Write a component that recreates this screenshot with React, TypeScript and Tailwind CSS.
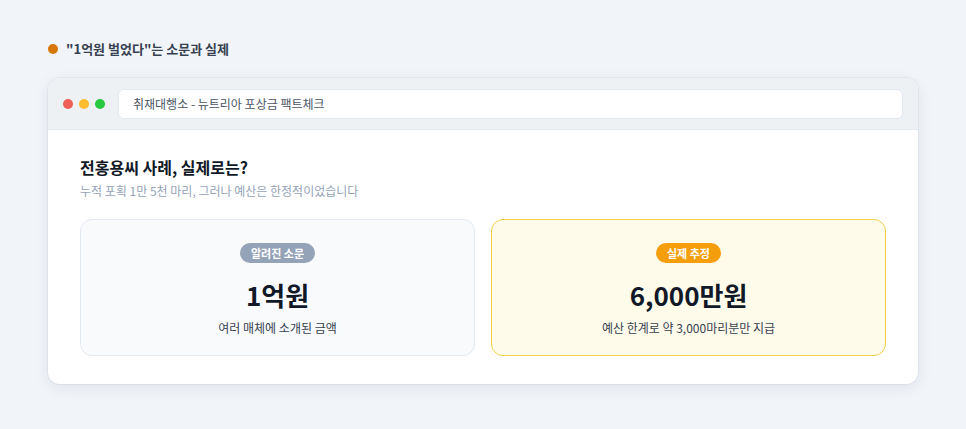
const font = { fontFamily: '"Noto Sans CJK KR", "Noto Sans", sans-serif' };

type Card = { badge: string; amount: string; note: string; tone: "gray" | "amber" };

const cards: Card[] = [
  { badge: "알려진 소문", amount: "1억원", note: "여러 매체에 소개된 금액", tone: "gray" },
  { badge: "실제 추정", amount: "6,000만원", note: "예산 한계로 약 3,000마리분만 지급", tone: "amber" },
];

const CompareCard = ({ card }: { card: Card }) => {
  const amber = card.tone === "amber";
  return (
    <div
      className={
        amber
          ? "flex flex-col items-center rounded-xl border border-[#f1cf4a] bg-[#fefbea] pt-[23px] pb-[18px]"
          : "flex flex-col items-center rounded-xl border border-[#e2e8f0] bg-[#f8fafc] pt-[23px] pb-[18px]"
      }
    >
      <span
        className={
          amber
            ? "h-5 rounded-full bg-[#f59e0b] px-[11px] text-[11px] font-bold leading-5 text-white"
            : "h-5 rounded-full bg-[#94a3b8] px-[11px] text-[11px] font-bold leading-5 text-white"
        }
      >
        {card.badge}
      </span>
      <div className="mt-[14px] text-[26px] font-bold leading-9 text-[#111827]">{card.amount}</div>
      <div className="mt-[6px] text-xs leading-[18px] text-[#374151]">{card.note}</div>
    </div>
  );
};

export default function App() {
  return (
    <div style={font} className="min-h-[429px] w-full bg-[#f1f4f8] px-12 pt-[39px] pb-11">
      <div className="flex h-5 items-center gap-2">
        <span className="h-[10px] w-[10px] rounded-full bg-[#d97706]" />
        <h2 className="text-[13px] font-bold text-[#374151]">"1억원 벌었다"는 소문과 실제</h2>
      </div>

      <div className="mt-[19px] overflow-hidden rounded-xl bg-white shadow-[0_4px_16px_rgba(15,23,42,0.08),0_0_0_1px_rgba(226,232,240,0.7)]">
        {/* browser chrome */}
        <div className="flex h-[52px] items-center gap-[13px] border-b border-[#e2e8f0] bg-[#eef1f4] pl-[15px] pr-[15px]">
          <div className="flex gap-[6px]">
            <span className="h-[10px] w-[10px] rounded-full bg-[#ef5f57]" />
            <span className="h-[10px] w-[10px] rounded-full bg-[#febc2e]" />
            <span className="h-[10px] w-[10px] rounded-full bg-[#28c840]" />
          </div>
          <div className="flex h-[30px] flex-1 items-center rounded-md border border-[#e2e8f0] bg-white px-[14px] text-xs text-[#4b5563]">
            취재대행소 - 뉴트리아 포상금 팩트체크
          </div>
        </div>

        <div className="px-8 pt-7 pb-7">
          <h3 className="text-base font-bold leading-[18px] text-[#111827]">전홍용씨 사례, 실제로는?</h3>
          <p className="mt-[6px] text-xs leading-[18px] text-[#94a3b8]">
            누적 포획 1만 5천 마리, 그러나 예산은 한정적이었습니다
          </p>
          <div className="mt-[19px] grid grid-cols-2 gap-4">
            {cards.map((c) => (
              <CompareCard key={c.badge} card={c} />
            ))}
          </div>
        </div>
      </div>
    </div>
  );
}
